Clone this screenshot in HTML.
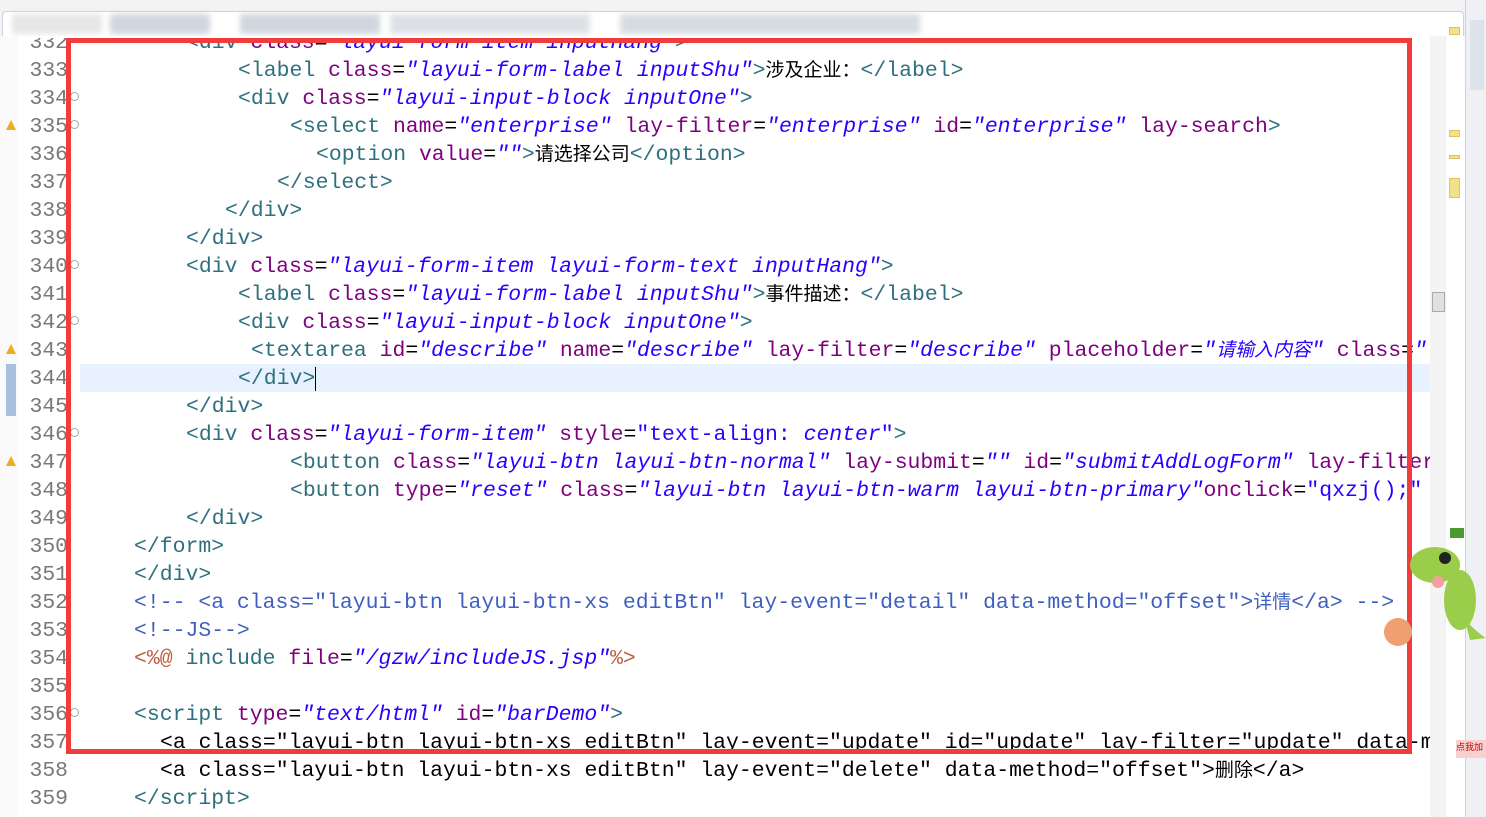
<!DOCTYPE html>
<html><head><meta charset="utf-8"><style>
body{margin:0;width:1486px;height:817px;overflow:hidden;background:#fff;position:relative;font-family:"Liberation Mono","Noto Sans CJK SC",monospace}
.tabbar{position:absolute;left:0;top:0;width:1465px;height:36px;background:#f3f3f3}
.tab{position:absolute;left:2px;top:11px;width:1460px;height:25px;background:#fff;border:1px solid #c9d3de;border-bottom:none;border-radius:4px 4px 0 0}
.blur{position:absolute;top:14px;height:20px;background:#c5ccd6;filter:blur(3px);opacity:.8}
.editor{position:absolute;left:0;top:36px;width:1430px;height:781px;overflow:hidden;background:#fff}
.ln{position:absolute;left:0;width:68px;text-align:right;color:#787878;font-size:21.4px;line-height:28px;height:28px}
.code{position:absolute;white-space:pre;font-size:21.45px;line-height:28px;height:28px;color:#000;font-family:"Liberation Mono",monospace}
.t{color:#2f7080}.a{color:#7f007f}.v{color:#2a00ff;font-style:italic}.s{color:#2a00ff}.c{color:#3f5fbf}.j{color:#bf5f3f}
.z{font-family:"Noto Sans CJK SC",sans-serif;font-size:19px;line-height:0;font-style:normal}
.hl{position:absolute;left:80px;width:1350px;height:28px;background:#e8f2fe}
.gut{position:absolute;left:0;top:36px;width:18px;height:781px;background:#fafafa}
.red{position:absolute;left:66px;top:38px;width:1336px;height:706px;border:5px solid #f23b3b}
.sb{position:absolute;left:1430px;top:36px;width:15px;height:781px;background:#f4f4f4}
.ov{position:absolute;left:1445px;top:36px;width:18px;height:781px;background:#fff;border-left:1px solid #eee}
.rp{position:absolute;left:1465px;top:0;width:21px;height:817px;background:#eef0f3;border-left:1px solid #c9d3de}
.warn{position:absolute;left:6px;width:0;height:0;border-left:5px solid transparent;border-right:5px solid transparent;border-bottom:10px solid #e8b020}
.fold{position:absolute;left:70px;width:7px;height:7px;border:1px solid #9aa;border-radius:50%}
.mk{position:absolute;left:1449px;width:9px;background:#f5e08a;border:1px solid #e0c060}
</style></head><body>
<div class="tabbar"><div class="tab"></div>
<div class="blur" style="left:12px;width:90px;background:#e0e0e0"></div>
<div class="blur" style="left:110px;width:100px"></div>
<div class="blur" style="left:240px;width:140px"></div>
<div class="blur" style="left:390px;width:200px;background:#d5dae0"></div>
<div class="blur" style="left:620px;width:300px;background:#cdd3da"></div>
</div>
<div class="editor">
<div class="hl" style="top:328px"></div>
</div>
<div class="gut"></div>
<div id="L" style="position:absolute;left:0;top:38px;width:1430px;height:779px;overflow:hidden">
<div class="ln" style="top:-9px">332</div><div class="code" style="left:186px;top:-9px"><span class="t">&lt;div</span> <span class="a">class</span>=<span class="v">"layui-form-item inputHang"</span><span class="t">&gt;</span></div>
<div class="ln" style="top:19px">333</div><div class="code" style="left:238px;top:19px"><span class="t">&lt;label</span> <span class="a">class</span>=<span class="v">"layui-form-label inputShu"</span><span class="t">&gt;</span><span class="z">涉及企业：</span><span class="t">&lt;/label&gt;</span></div>
<div class="ln" style="top:47px">334</div><div class="code" style="left:238px;top:47px"><span class="t">&lt;div</span> <span class="a">class</span>=<span class="v">"layui-input-block inputOne"</span><span class="t">&gt;</span></div>
<div class="ln" style="top:75px">335</div><div class="code" style="left:290px;top:75px"><span class="t">&lt;select</span> <span class="a">name</span>=<span class="v">"enterprise"</span> <span class="a">lay-filter</span>=<span class="v">"enterprise"</span> <span class="a">id</span>=<span class="v">"enterprise"</span> <span class="a">lay-search</span><span class="t">&gt;</span></div>
<div class="ln" style="top:103px">336</div><div class="code" style="left:316px;top:103px"><span class="t">&lt;option</span> <span class="a">value</span>=<span class="v">""</span><span class="t">&gt;</span><span class="z">请选择公司</span><span class="t">&lt;/option&gt;</span></div>
<div class="ln" style="top:131px">337</div><div class="code" style="left:277px;top:131px"><span class="t">&lt;/select&gt;</span></div>
<div class="ln" style="top:159px">338</div><div class="code" style="left:225px;top:159px"><span class="t">&lt;/div&gt;</span></div>
<div class="ln" style="top:187px">339</div><div class="code" style="left:186px;top:187px"><span class="t">&lt;/div&gt;</span></div>
<div class="ln" style="top:215px">340</div><div class="code" style="left:186px;top:215px"><span class="t">&lt;div</span> <span class="a">class</span>=<span class="v">"layui-form-item layui-form-text inputHang"</span><span class="t">&gt;</span></div>
<div class="ln" style="top:243px">341</div><div class="code" style="left:238px;top:243px"><span class="t">&lt;label</span> <span class="a">class</span>=<span class="v">"layui-form-label inputShu"</span><span class="t">&gt;</span><span class="z">事件描述：</span><span class="t">&lt;/label&gt;</span></div>
<div class="ln" style="top:271px">342</div><div class="code" style="left:238px;top:271px"><span class="t">&lt;div</span> <span class="a">class</span>=<span class="v">"layui-input-block inputOne"</span><span class="t">&gt;</span></div>
<div class="ln" style="top:299px">343</div><div class="code" style="left:251px;top:299px"><span class="t">&lt;textarea</span> <span class="a">id</span>=<span class="v">"describe"</span> <span class="a">name</span>=<span class="v">"describe"</span> <span class="a">lay-filter</span>=<span class="v">"describe"</span> <span class="a">placeholder</span>=<span class="v">"<span class="z" style="font-style:italic">请输入内容</span>"</span> <span class="a">class</span>=<span class="v">"</span></div>
<div class="ln" style="top:327px">344</div><div class="code" style="left:238px;top:327px"><span class="t">&lt;/div&gt;</span><span style="border-left:1px solid #000"></span></div>
<div class="ln" style="top:355px">345</div><div class="code" style="left:186px;top:355px"><span class="t">&lt;/div&gt;</span></div>
<div class="ln" style="top:383px">346</div><div class="code" style="left:186px;top:383px"><span class="t">&lt;div</span> <span class="a">class</span>=<span class="v">"layui-form-item"</span> <span class="a">style</span>=<span class="s">"text-align: <i>center</i>"</span><span class="t">&gt;</span></div>
<div class="ln" style="top:411px">347</div><div class="code" style="left:290px;top:411px"><span class="t">&lt;button</span> <span class="a">class</span>=<span class="v">"layui-btn layui-btn-normal"</span> <span class="a">lay-submit</span>=<span class="v">""</span> <span class="a">id</span>=<span class="v">"submitAddLogForm"</span> <span class="a">lay-filter</span></div>
<div class="ln" style="top:439px">348</div><div class="code" style="left:290px;top:439px"><span class="t">&lt;button</span> <span class="a">type</span>=<span class="v">"reset"</span> <span class="a">class</span>=<span class="v">"layui-btn layui-btn-warm layui-btn-primary"</span><span class="a">onclick</span>=<span class="s">"qxzj();"</span></div>
<div class="ln" style="top:467px">349</div><div class="code" style="left:186px;top:467px"><span class="t">&lt;/div&gt;</span></div>
<div class="ln" style="top:495px">350</div><div class="code" style="left:134px;top:495px"><span class="t">&lt;/form&gt;</span></div>
<div class="ln" style="top:523px">351</div><div class="code" style="left:134px;top:523px"><span class="t">&lt;/div&gt;</span></div>
<div class="ln" style="top:551px">352</div><div class="code c" style="left:134px;top:551px">&lt;!-- &lt;a class="layui-btn layui-btn-xs editBtn" lay-event="detail" data-method="offset"&gt;<span class="z">详情</span>&lt;/a&gt; --&gt;</div>
<div class="ln" style="top:579px">353</div><div class="code c" style="left:134px;top:579px">&lt;!--JS--&gt;</div>
<div class="ln" style="top:607px">354</div><div class="code" style="left:134px;top:607px"><span class="j">&lt;%@</span> <span class="t">include</span> <span class="a">file</span>=<span class="v">"/gzw/includeJS.jsp"</span><span class="j">%&gt;</span></div>
<div class="ln" style="top:635px">355</div>
<div class="ln" style="top:663px">356</div><div class="code" style="left:134px;top:663px"><span class="t">&lt;script</span> <span class="a">type</span>=<span class="v">"text/html"</span> <span class="a">id</span>=<span class="v">"barDemo"</span><span class="t">&gt;</span></div>
<div class="ln" style="top:691px">357</div><div class="code" style="left:160px;top:691px">&lt;a class="layui-btn layui-btn-xs editBtn" lay-event="update" id="update" lay-filter="update" data-method</div>
<div class="ln" style="top:719px">358</div><div class="code" style="left:160px;top:719px">&lt;a class="layui-btn layui-btn-xs editBtn" lay-event="delete" data-method="offset"&gt;<span class="z">删除</span>&lt;/a&gt;</div>
<div class="ln" style="top:747px">359</div><div class="code" style="left:134px;top:747px"><span class="t">&lt;/script&gt;</span></div>
</div>
<div class="warn" style="top:120px"></div><div class="warn" style="top:344px"></div><div class="warn" style="top:456px"></div>
<div style="position:absolute;left:6px;top:364px;width:10px;height:52px;background:#a8c0e0"></div>
<div class="fold" style="top:92px"></div><div class="fold" style="top:120px"></div><div class="fold" style="top:260px"></div><div class="fold" style="top:316px"></div><div class="fold" style="top:428px"></div><div class="fold" style="top:708px"></div>
<div class="sb"><div style="position:absolute;left:2px;top:256px;width:11px;height:18px;background:#e0e0e0;border:1px solid #aaa"></div></div>
<div class="ov"></div>
<div class="mk" style="top:27px;height:6px"></div>
<div class="mk" style="top:130px;height:5px"></div>
<div class="mk" style="top:155px;height:2px"></div>
<div class="mk" style="top:178px;height:18px"></div>
<div class="rp"><div style="position:absolute;left:4px;top:20px;width:14px;height:70px;background:#dde3ea"></div></div>
<div class="red"></div>
<svg style="position:absolute;left:1380px;top:520px" width="106" height="140">
<ellipse cx="80" cy="80" rx="16" ry="30" fill="#9acd4a"/>
<ellipse cx="55" cy="45" rx="25" ry="18" fill="#9acd4a"/>
<circle cx="65" cy="38" r="6" fill="#222"/>
<circle cx="58" cy="62" r="6" fill="#f2a0a0"/>
<path d="M85 100 Q100 115 106 118 L90 120Z" fill="#9acd4a"/>
<circle cx="18" cy="112" r="14" fill="#f0a070"/>
<rect x="70" y="8" width="14" height="10" fill="#4a9a30"/>
</svg>
<div style="position:absolute;left:1456px;top:740px;width:30px;height:18px;background:#f8d0d0;color:#c00;font-size:9px;font-family:'Noto Sans CJK SC',sans-serif">点我加</div>
</body></html>
